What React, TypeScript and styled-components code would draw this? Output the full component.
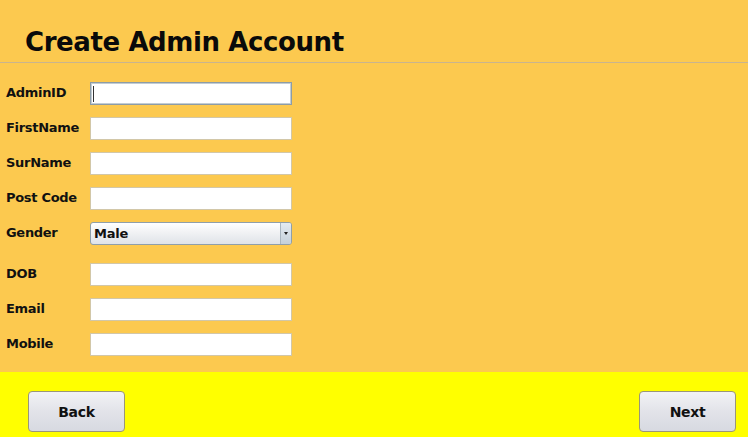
import React from "react";
import styled, { createGlobalStyle } from "styled-components";

const GlobalStyle = createGlobalStyle`
  html, body {
    margin: 0;
    padding: 0;
    background: #fcc94f;
  }
  * {
    box-sizing: border-box;
  }
`;

const Page = styled.div`
  width: 748px;
  height: 437px;
  display: flex;
  flex-direction: column;
  background: #fcc94f;
  font-family: "DejaVu Sans", Verdana, sans-serif;
  color: #111;
  overflow: hidden;
`;

const Header = styled.div`
  height: 63px;
  flex-shrink: 0;
  display: flex;
  align-items: flex-end;
  padding: 0 0 5px 25px;
  border-bottom: 1px solid #c9b48e;
`;

const Title = styled.h1`
  margin: 0;
  font-size: 26px;
  font-weight: bold;
  letter-spacing: -0.4px;
  color: #0a0a0a;
`;

const Form = styled.div`
  flex: 1;
  padding: 19px 0 0 6px;
  display: flex;
  flex-direction: column;
`;

const Row = styled.div<{ $extra?: number }>`
  display: flex;
  align-items: flex-start;
  height: 35px;
  margin-top: ${(p) => p.$extra ?? 0}px;
`;

const Label = styled.label`
  width: 84px;
  flex-shrink: 0;
  font-size: 13px;
  font-weight: bold;
  line-height: 16px;
  padding-top: 3px;
  letter-spacing: -0.3px;
  color: #111;
`;

const Field = styled.div`
  position: relative;
  width: 202px;
  height: 23px;
`;

const Input = styled.input<{ $focused?: boolean }>`
  width: 100%;
  height: 100%;
  margin: 0;
  padding: 0 3px;
  background: #fff;
  border: 1px solid ${(p) => (p.$focused ? "#8d9ca6" : "#d2c7a8")};
  box-shadow: ${(p) => (p.$focused ? "inset 0 0 0 1px #c2ccd3" : "none")};
  outline: none;
  font-family: inherit;
  font-size: 13px;
`;

const Caret = styled.span`
  position: absolute;
  left: 3px;
  top: 4px;
  width: 1px;
  height: 16px;
  background: #333;
`;

const Select = styled.div`
  width: 202px;
  height: 23px;
  display: flex;
  align-items: center;
  border: 1px solid #8f9faa;
  border-radius: 3px;
  background: linear-gradient(#ffffff, #f1f2f4 45%, #dfe3e8);
  font-size: 13px;
  font-weight: bold;
  padding-left: 3px;
  letter-spacing: -0.2px;
`;

const SelectText = styled.span`
  flex: 1;
`;

const Arrow = styled.span`
  width: 11px;
  height: 21px;
  display: flex;
  align-items: center;
  justify-content: center;
  border-left: 1px solid #a9b6c0;
  border-radius: 0 2px 2px 0;
  background: linear-gradient(#e4ebf1, #c4d0da);
  &::after {
    content: "";
    border-left: 2.5px solid transparent;
    border-right: 2.5px solid transparent;
    border-top: 3px solid #222;
  }
`;

const Footer = styled.div`
  height: 65px;
  flex-shrink: 0;
  background: #ffff00;
  display: flex;
  justify-content: space-between;
  align-items: flex-end;
  padding: 0 12px 5px 28px;
`;

const Button = styled.button`
  width: 97px;
  height: 41px;
  border: 1px solid #9a9678;
  border-radius: 4px;
  background: linear-gradient(#f2f2f5, #e2e3e9 50%, #d7d9e1);
  font-family: "DejaVu Sans", Verdana, sans-serif;
  font-size: 14px;
  font-weight: bold;
  letter-spacing: -0.3px;
  color: #111;
  padding: 0;
`;

const fields = [
  { label: "FirstName" },
  { label: "SurName" },
  { label: "Post Code" },
];

const lower = ["Email", "Mobile"];

export default function App() {
  return (
    <Page>
      <GlobalStyle />
      <Header>
        <Title>Create Admin Account</Title>
      </Header>
      <Form>
        <Row>
          <Label>AdminID</Label>
          <Field>
            <Input $focused readOnly />
            <Caret />
          </Field>
        </Row>
        {fields.map((f) => (
          <Row key={f.label}>
            <Label>{f.label}</Label>
            <Field>
              <Input readOnly />
            </Field>
          </Row>
        ))}
        <Row>
          <Label>Gender</Label>
          <Select>
            <SelectText>Male</SelectText>
            <Arrow />
          </Select>
        </Row>
        <Row $extra={6}>
          <Label>DOB</Label>
          <Field>
            <Input readOnly />
          </Field>
        </Row>
        {lower.map((l) => (
          <Row key={l}>
            <Label>{l}</Label>
            <Field>
              <Input readOnly />
            </Field>
          </Row>
        ))}
      </Form>
      <Footer>
        <Button>Back</Button>
        <Button>Next</Button>
      </Footer>
    </Page>
  );
}
